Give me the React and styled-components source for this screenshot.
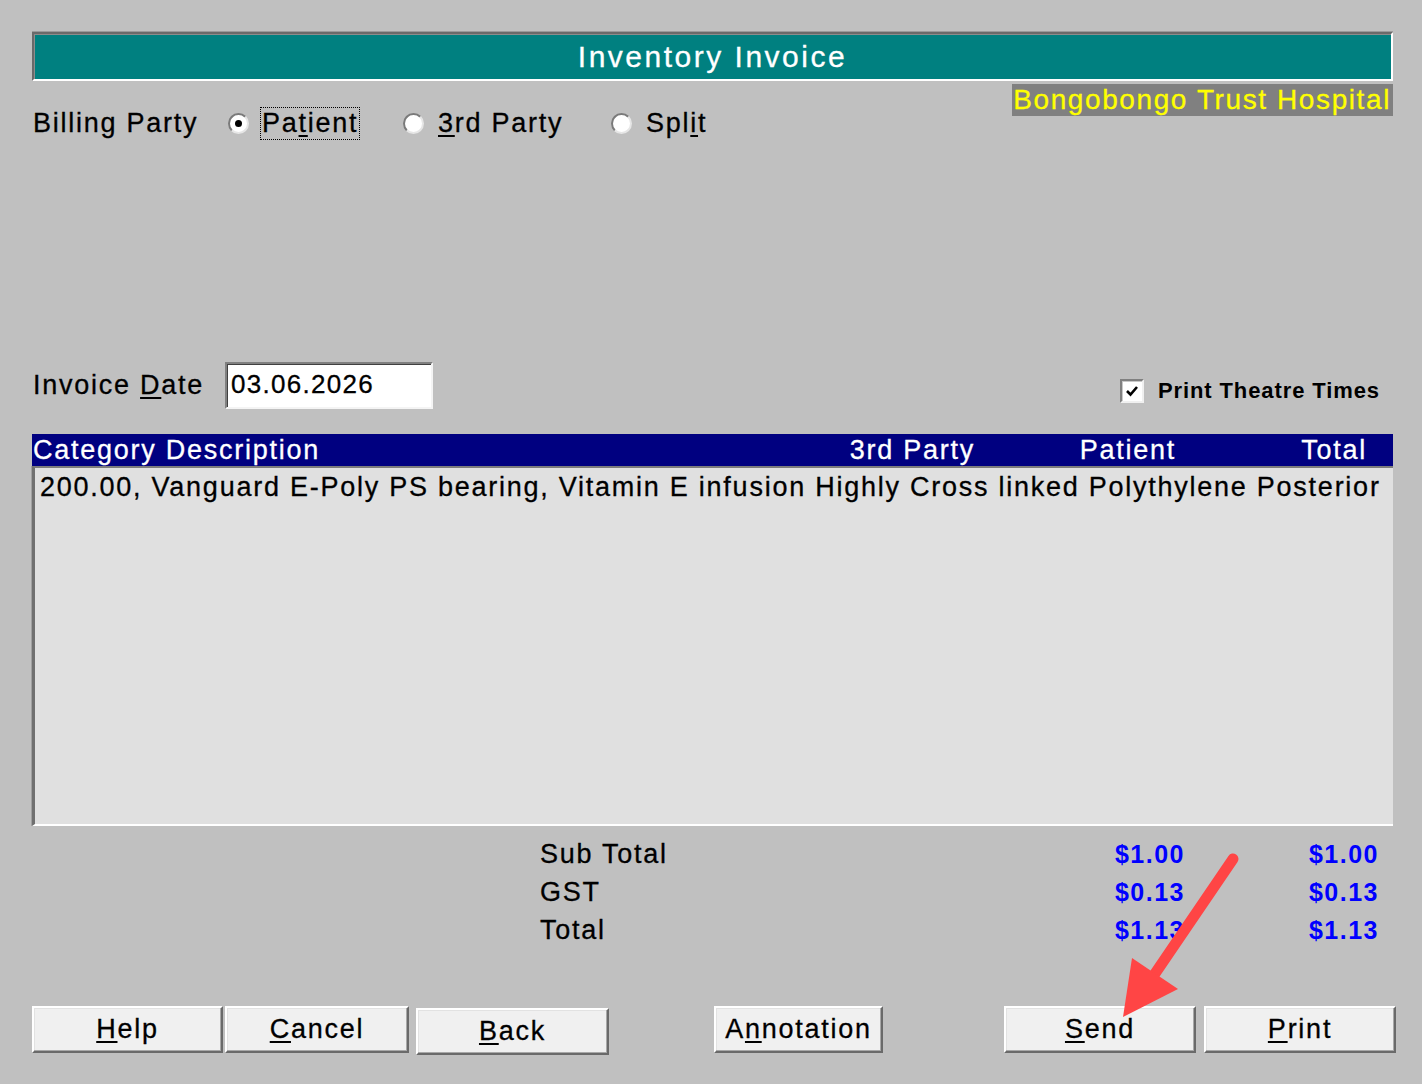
import React from 'react';
import styled, { createGlobalStyle } from 'styled-components';

const GlobalStyle = createGlobalStyle`
  html, body { margin: 0; padding: 0; background: #c0c0c0; }
  body { font-family: "Liberation Sans", Arial, sans-serif; color: #000; }
  * { box-sizing: border-box; }
`;

const Page = styled.div`
  position: relative;
  width: 1422px;
  height: 1084px;
  padding: 32px 29px 0 32px;
  background: #c0c0c0;
  font-family: "Liberation Sans", Arial, sans-serif;
  font-size: 27px;
  letter-spacing: 1.75px;
  -webkit-text-stroke: 0.3px currentColor;
  overflow: hidden;
`;

const TitleBar = styled.div`
  height: 49px;
  background: #008080;
  border: 2px solid;
  border-color: #6a6a6a #ffffff #ffffff #6a6a6a;
  box-shadow: inset 1px 1px 0 #8c8c8c, 0 -1px 0 #9a9a9a;
  color: #fff;
  font-size: 30px;
  letter-spacing: 2.5px;
  display: flex;
  align-items: center;
  justify-content: center;
  line-height: 1;
`;

const HeaderRow = styled.div`
  display: flex;
  justify-content: space-between;
  align-items: flex-start;
`;

const BillingGroup = styled.div`
  margin-top: 25px;
  height: 34px;
  display: flex;
  align-items: center;
`;

const FieldLabel = styled.div`
  width: ${p => p.$w}px;
  padding-left: 1px;
  white-space: nowrap;
`;

const RadioOption = styled.label`
  display: flex;
  align-items: center;
  width: ${p => (p.$w ? `${p.$w}px` : 'auto')};
  gap: ${p => p.$gap}px;
  white-space: nowrap;
`;

const Radio = styled.span`
  position: relative;
  width: 21px;
  height: 21px;
  border-radius: 50%;
  background: #fff;
  border: 2px solid;
  border-color: #7a7a7a #e6e6e6 #e6e6e6 #7a7a7a;
  flex: none;
  &::after {
    content: '';
    display: ${p => (p.$checked ? 'block' : 'none')};
    position: absolute;
    left: 5px;
    top: 5px;
    width: 7px;
    height: 7px;
    border-radius: 50%;
    background: #000;
  }
`;

const FocusText = styled.span`
  border: 1px dotted #000;
  padding: 1px 1px 2px 1px;
  line-height: 28px;
`;

const Key = styled.span`
  text-decoration: underline;
  text-underline-offset: 3px;
  text-decoration-thickness: 2px;
`;

const Hospital = styled.div`
  margin-top: 3px;
  height: 32px;
  line-height: 32px;
  padding: 0 2px 0 1px;
  background: #808080;
  color: #ffff00;
  font-size: 28px;
  letter-spacing: 1.6px;
  white-space: nowrap;
`;

const InvoiceRow = styled.div`
  margin-top: 222px;
  height: 47px;
  display: flex;
  align-items: center;
`;

const DateInput = styled.div`
  width: 208px;
  height: 47px;
  background: #fff;
  border: 2px solid;
  border-color: #808080 #f4f4f4 #f4f4f4 #808080;
  box-shadow: inset 1px 1px 0 #404040;
  padding-left: 4px;
  font-size: 26px;
  letter-spacing: 1.3px;
  display: flex;
  align-items: center;
  padding-bottom: 3px;
`;

const Spacer = styled.div`
  flex: 1;
`;

const CheckGroup = styled.label`
  align-self: flex-end;
  margin-bottom: 5px;
  margin-right: 13px;
  display: flex;
  align-items: center;
  gap: 14px;
`;

const CheckBox = styled.span`
  width: 24px;
  height: 24px;
  flex: none;
  background: #fff;
  border: 2px solid;
  border-color: #808080 #f0f0f0 #f0f0f0 #808080;
  box-shadow: inset 1px 1px 0 #c8c8c8;
  display: flex;
  align-items: center;
  justify-content: center;
`;

const CheckText = styled.span`
  font-size: 22px;
  font-weight: 700;
  letter-spacing: 0.9px;
  -webkit-text-stroke: 0;
  white-space: nowrap;
`;

const TableHeader = styled.div`
  margin-top: 25px;
  height: 32px;
  background: #000080;
  color: #fff;
  display: grid;
  grid-template-columns: 1fr 150px 201px 191px;
  align-items: center;
  padding: 0 26px 0 1px;
  white-space: nowrap;
`;

const HeadCell = styled.div`
  text-align: ${p => (p.$right ? 'right' : 'left')};
`;

const ListBox = styled.div`
  height: 360px;
  background: #e0e0e0;
  border-top: 2px solid #7c7c7c;
  border-left: 3px solid #707070;
  border-bottom: 2px solid #fff;
  box-shadow: -1px 0 0 #a0a0a0;
  padding: 3px 0 0 5px;
  line-height: 32px;
  white-space: nowrap;
  overflow: hidden;
`;

const Totals = styled.div`
  margin-top: 9px;
  display: grid;
  grid-template-columns: 1fr 200px 194px;
  grid-auto-rows: 38px;
  align-items: center;
  padding: 0 14px 0 508px;
`;

const TotalLabel = styled.div`
  white-space: nowrap;
`;

const TotalValue = styled.div`
  text-align: right;
  color: #0000ff;
  font-weight: 700;
  font-size: 25px;
  letter-spacing: 1.5px;
  -webkit-text-stroke: 0;
`;

const ButtonRow = styled.div`
  margin-top: 57px;
  margin-right: -3px;
  display: flex;
  align-items: flex-start;
`;

const Button = styled.button`
  width: ${p => p.$w}px;
  height: 47px;
  margin-left: ${p => p.$ml || 0}px;
  margin-top: ${p => p.$mt || 0}px;
  padding: 0;
  background: #f0f0f0;
  border: 2px solid;
  border-color: #ffffff #6a6a6a #6a6a6a #ffffff;
  box-shadow: inset -1px -1px 0 #a8a8a8, inset 1px 1px 0 #e2e2e2;
  font-family: "Liberation Sans", Arial, sans-serif;
  font-size: 27px;
  letter-spacing: 1.75px;
  -webkit-text-stroke: 0.3px #000;
  color: #000;
  display: flex;
  align-items: center;
  justify-content: center;
  flex: none;
`;

const ArrowLayer = styled.svg`
  position: absolute;
  left: 0;
  top: 0;
  pointer-events: none;
`;

export default function App() {
  return (
    <>
      <GlobalStyle />
      <Page>
        <TitleBar>Inventory Invoice</TitleBar>
        <HeaderRow>
          <BillingGroup>
            <FieldLabel $w={196}>Billing Party</FieldLabel>
            <RadioOption $w={175} $gap={11}>
              <Radio $checked />
              <FocusText>Pa<Key>t</Key>ient</FocusText>
            </RadioOption>
            <RadioOption $w={208} $gap={14}>
              <Radio />
              <span><Key>3</Key>rd Party</span>
            </RadioOption>
            <RadioOption $gap={14}>
              <Radio />
              <span>Spl<Key>i</Key>t</span>
            </RadioOption>
          </BillingGroup>
          <Hospital>Bongobongo Trust Hospital</Hospital>
        </HeaderRow>

        <InvoiceRow>
          <FieldLabel $w={193}>Invoice <Key>D</Key>ate</FieldLabel>
          <DateInput>03.06.2026</DateInput>
          <Spacer />
          <CheckGroup>
            <CheckBox>
              <svg width="14" height="14" viewBox="0 0 14 14">
                <path d="M2 7 L5.5 10.5 L12 3" fill="none" stroke="#000" strokeWidth="2.6" />
              </svg>
            </CheckBox>
            <CheckText>Print Theatre Times</CheckText>
          </CheckGroup>
        </InvoiceRow>

        <TableHeader>
          <HeadCell>Category Description</HeadCell>
          <HeadCell $right>3rd Party</HeadCell>
          <HeadCell $right>Patient</HeadCell>
          <HeadCell $right>Total</HeadCell>
        </TableHeader>
        <ListBox>
          200.00, Vanguard E-Poly PS bearing, Vitamin E infusion Highly Cross linked Polythylene Posterior
        </ListBox>

        <Totals>
          <TotalLabel>Sub Total</TotalLabel>
          <TotalValue>$1.00</TotalValue>
          <TotalValue>$1.00</TotalValue>
          <TotalLabel>GST</TotalLabel>
          <TotalValue>$0.13</TotalValue>
          <TotalValue>$0.13</TotalValue>
          <TotalLabel>Total</TotalLabel>
          <TotalValue>$1.13</TotalValue>
          <TotalValue>$1.13</TotalValue>
        </Totals>

        <ButtonRow>
          <Button $w={191}><Key>H</Key>elp</Button>
          <Button $w={184} $ml={2}><Key>C</Key>ancel</Button>
          <Button $w={193} $ml={7} $mt={2}><Key>B</Key>ack</Button>
          <Button $w={169} $ml={105}>A<Key>n</Key>notation</Button>
          <Button $w={192} $ml={121}><Key>S</Key>end</Button>
          <Button $w={192} $ml={8}><Key>P</Key>rint</Button>
        </ButtonRow>

        <ArrowLayer width="1422" height="1084" viewBox="0 0 1422 1084">
          <line x1="1233" y1="859" x2="1152" y2="978" stroke="#ff4545" strokeWidth="11" strokeLinecap="round" />
          <polygon points="1123,1017 1132,958 1178,989" fill="#ff4545" />
        </ArrowLayer>
      </Page>
    </>
  );
}
